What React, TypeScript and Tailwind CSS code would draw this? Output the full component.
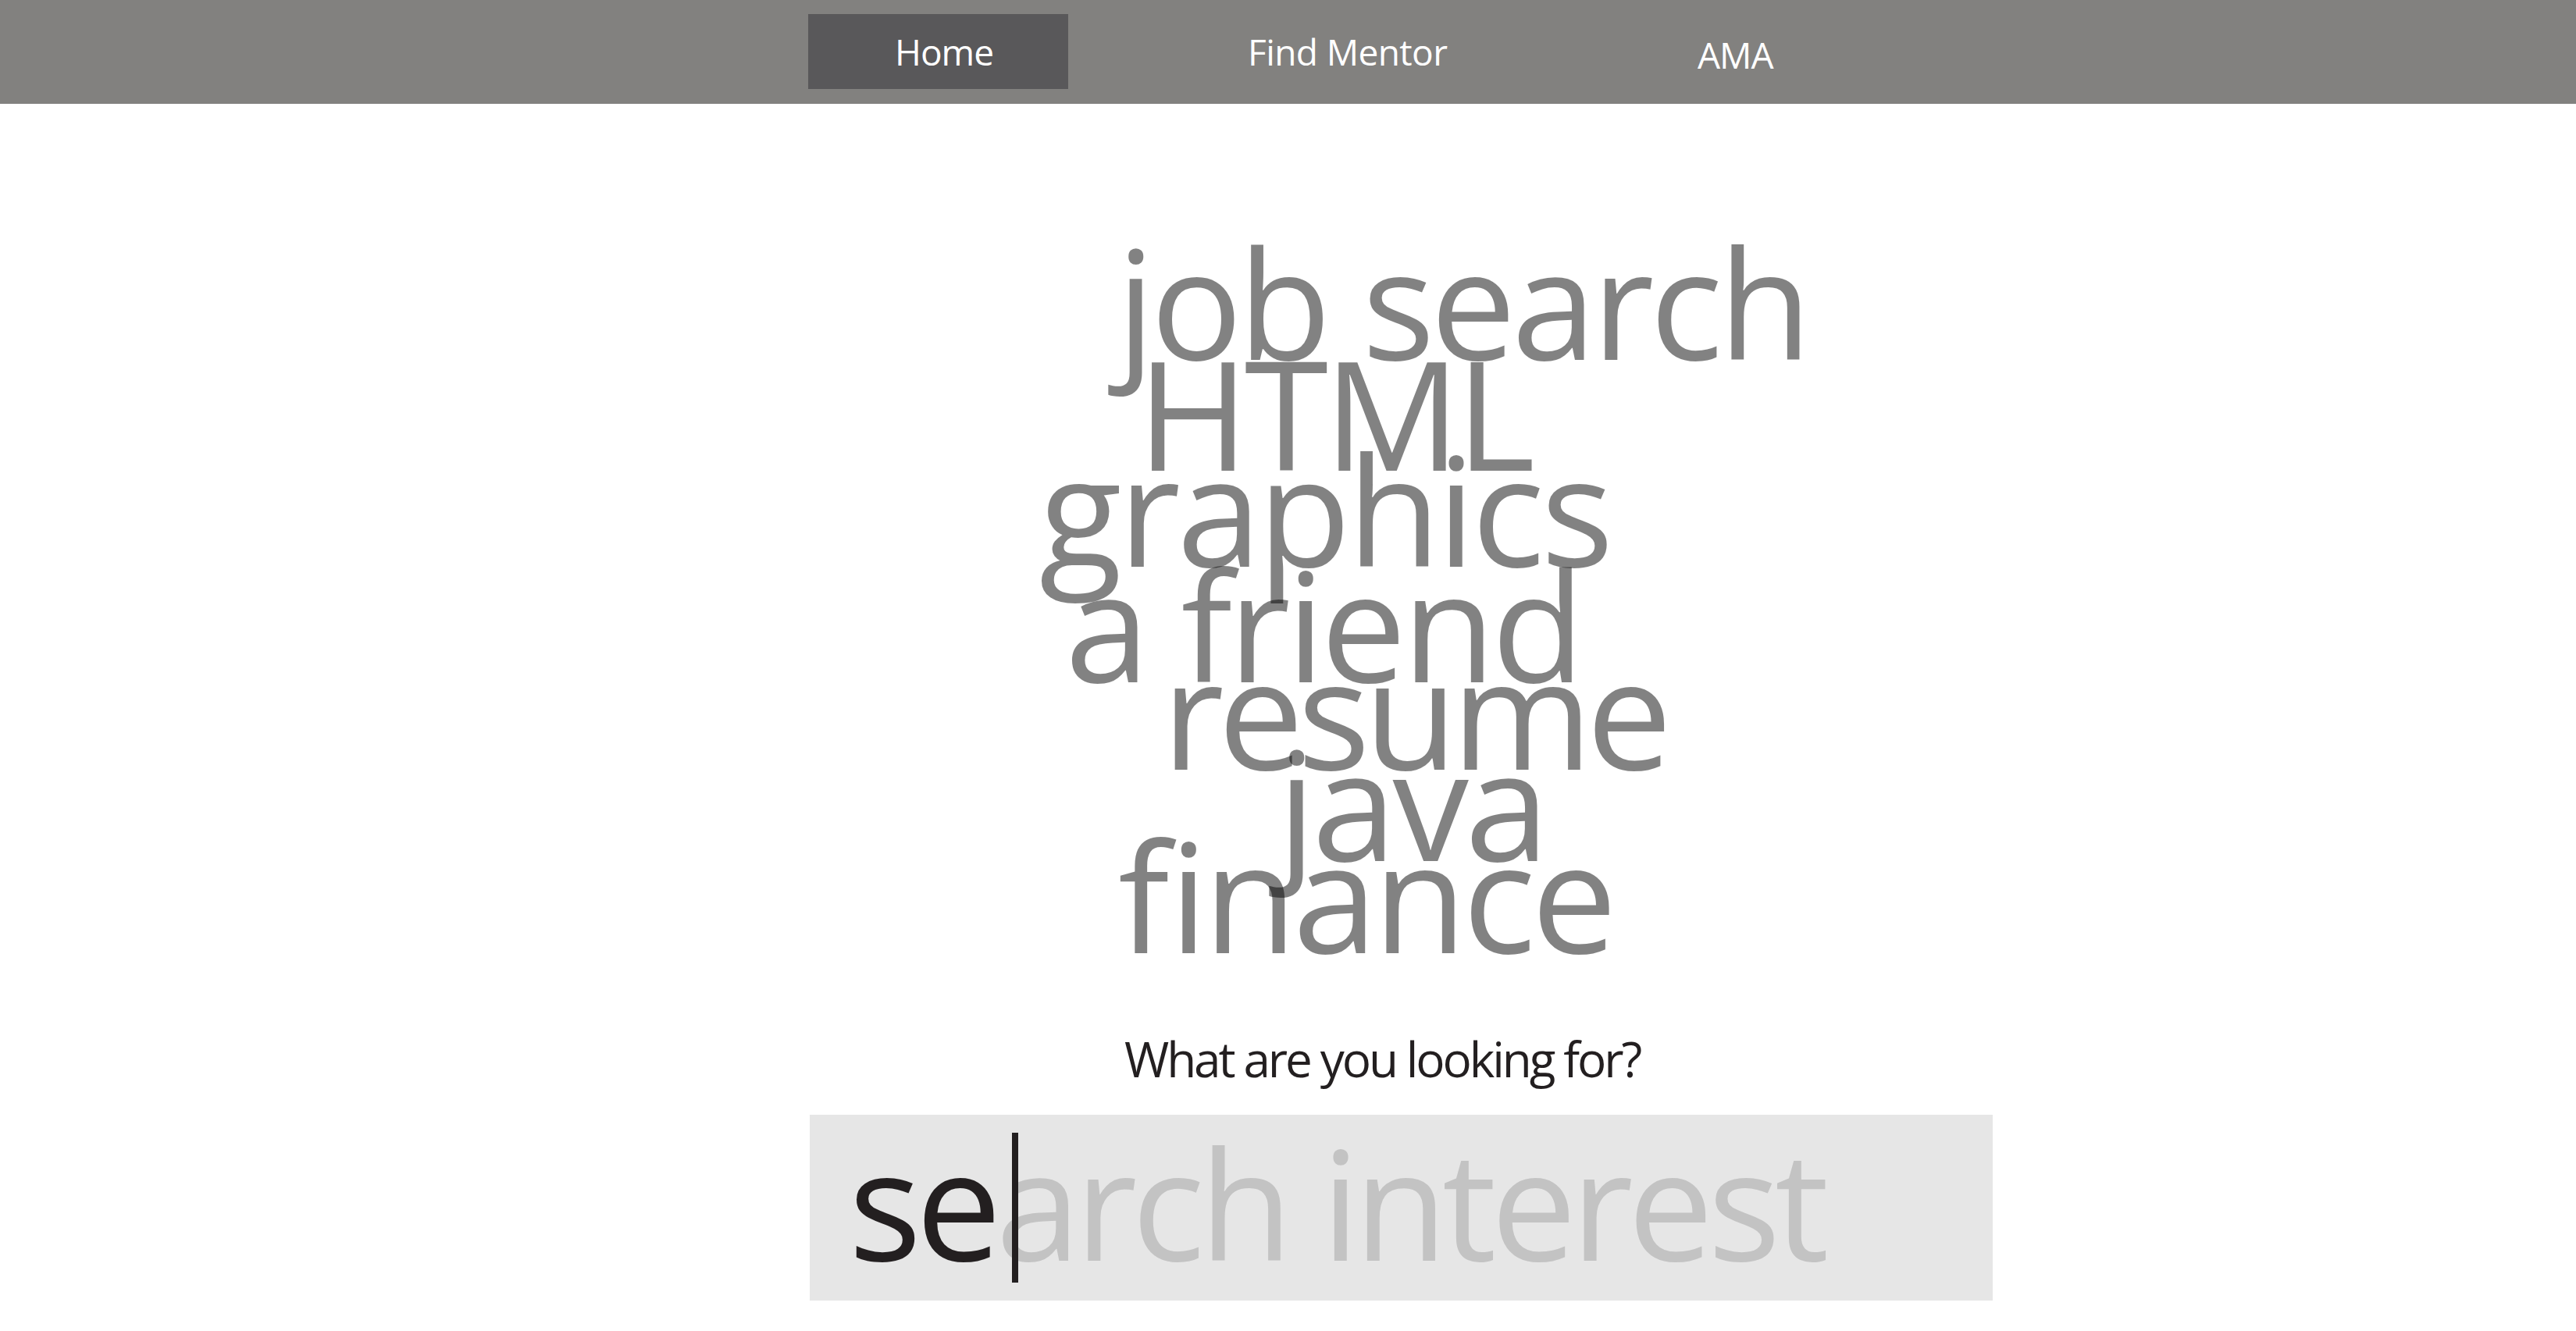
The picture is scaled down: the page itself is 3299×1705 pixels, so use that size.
import React from "react";

const cloud =
  "block whitespace-nowrap text-[195px] leading-[116px] text-[rgba(0,0,0,0.49)]";

export default function App() {
  return (
    <div className="min-h-[1705px] w-full bg-white font-['Open_Sans',sans-serif]">
      <nav className="flex h-[133px] items-start bg-[#82817f] pl-[1035px] pt-[18px] text-[46px] text-white">
        <div className="flex h-[96px] w-[333px] items-center justify-center bg-[#59585a] pl-[15px] leading-[96px] tracking-[-1px]">
          Home
        </div>
        <div className="ml-[230px] w-[576px] leading-[96px] tracking-[-0.6px]">Find Mentor</div>
        <div className="pt-[4px] leading-[96px] tracking-[-1px]">AMA</div>
      </nav>

      <main className="flex flex-col pl-[1035px]">
        <div className="mt-[195px] flex flex-col items-start">
          <span className={`${cloud} ml-[395px] tracking-[-5.5px]`}>job search</span>
          <span className={`${cloud} ml-[421px] mt-[26px] tracking-[-6px]`}>HTML</span>
          <span className={`${cloud} ml-[296px] mt-[7px] tracking-[-4.7px]`}>graphics</span>
          <span className={`${cloud} ml-[329px] mt-[32px] tracking-[-5.2px]`}>a friend</span>
          <span className={`${cloud} ml-[453px] -mt-[4px] tracking-[-7.7px]`}>resume</span>
          <span className={`${cloud} ml-[601px] mt-[1px] tracking-[-5px]`}>java</span>
          <span className={`${cloud} ml-[397px] mt-[2px] tracking-[-5.3px]`}>ﬁnance</span>
        </div>

        <p className="ml-[405px] mt-[120px] whitespace-nowrap text-[62px] leading-[64px] tracking-[-3.1px] text-[#231f20]">
          What are you looking for?
        </p>

        <div className="relative ml-[2px] mt-[40px] h-[238px] w-[1515px] bg-[#e6e6e6] pl-[50px] pt-[14px]">
          <div className="whitespace-nowrap text-[195px] leading-[195px] tracking-[-7px]">
            <span className="text-[#231f20]">se</span>
            <span className="text-[#c3c3c3]">arch interest</span>
          </div>
          <span className="absolute left-[259px] top-[23px] h-[192px] w-[8px] bg-[#231f20]" />
        </div>
      </main>
    </div>
  );
}
